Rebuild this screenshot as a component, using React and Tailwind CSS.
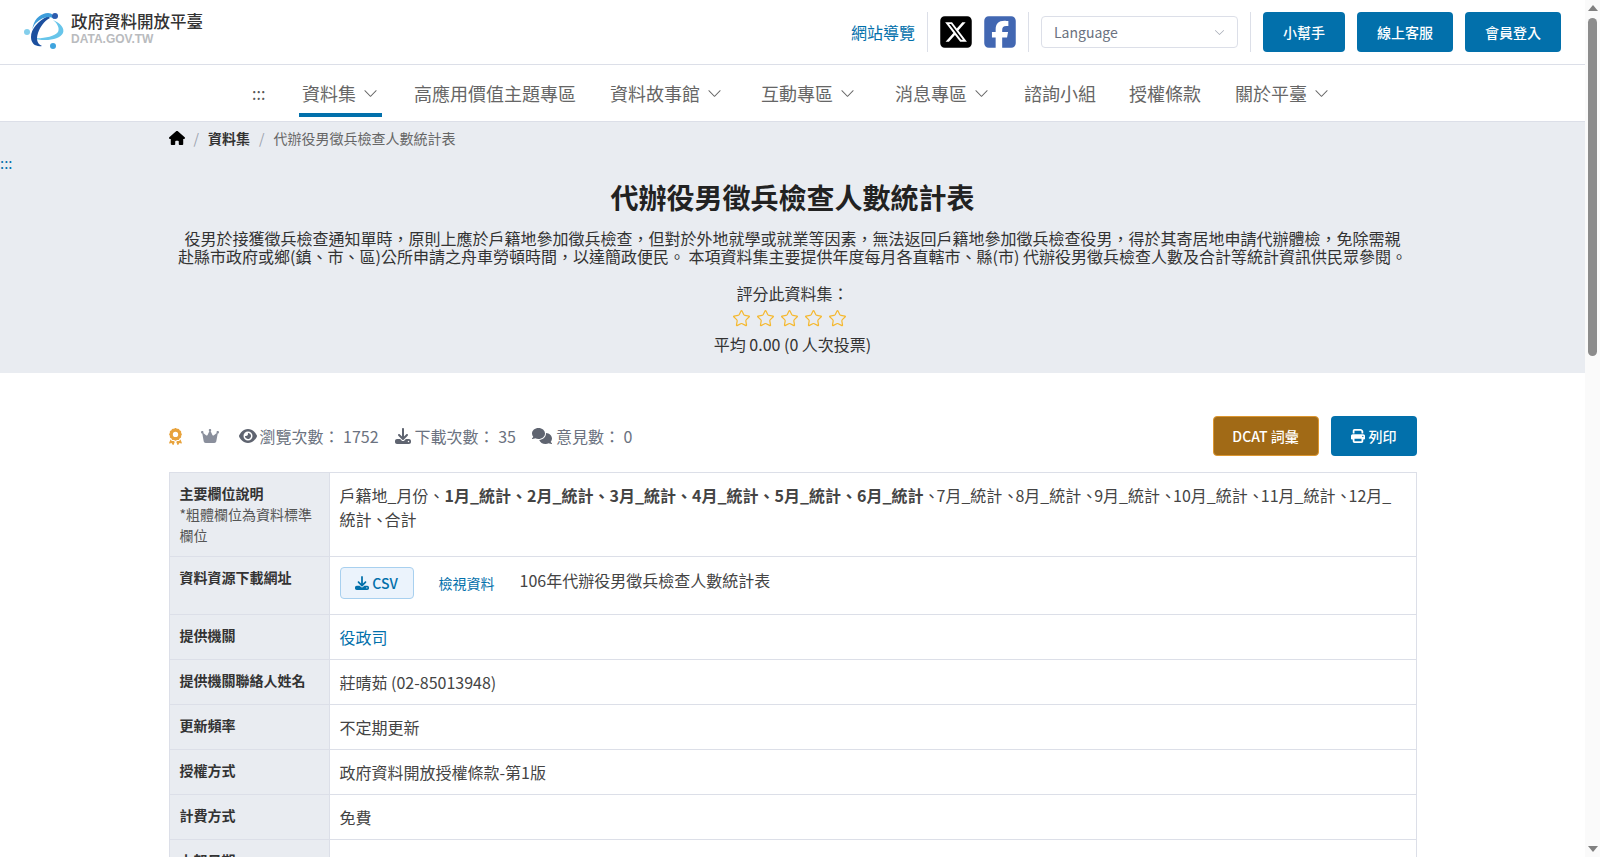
import React from "react";
import { Star } from "lucide-react";
import { BsChevronDown } from "react-icons/bs";
import { FaHouse, FaEye, FaDownload, FaComments, FaPrint, FaCrown, FaAward, FaSquareXTwitter, FaSquareFacebook } from "react-icons/fa6";

const navItems = [
  { label: "資料集", caret: true, active: true, space: "mr-[1px]" },
  { label: "高應用價值主題專區", space: "" },
  { label: "資料故事館", caret: true, space: "mr-[4px]" },
  { label: "互動專區", caret: true, space: "mr-[5px]" },
  { label: "消息專區", caret: true, space: "" },
  { label: "諮詢小組", space: "-mr-[1px]" },
  { label: "授權條款", space: "" },
  { label: "關於平臺", caret: true, space: "" },
];

const boldFields = ["1月_統計", "2月_統計", "3月_統計", "4月_統計", "5月_統計", "6月_統計"];
const plainFields = ["7月_統計", "8月_統計", "9月_統計", "10月_統計", "11月_統計", "12月_統計"];

const simpleRows = [
  ["提供機關聯絡人姓名", "莊晴茹 (02-85013948)"],
  ["更新頻率", "不定期更新"],
  ["授權方式", "政府資料開放授權條款-第1版"],
  ["計費方式", "免費"],
  ["上架日期", "2018-08-15"],
  ["詮釋資料更新時間", "2024-06-12 01:03:27"],
  ["資料集類型", "原始資料"],
  ["編碼格式", "UTF-8"],
  ["資料量", "1"],
  ["收費及法令依據", "無"],
];

function Logo() {
  return (
    <svg width="42" height="38" viewBox="0 0 42 38" className="shrink-0">
      {/* orbit */}
      <path d="M29 7 C36 10 41 15 39 20 C36 27 20 29 8 25 C18 26 30 24 34 19 C36 15 33 10 29 7 Z" fill="#67c5ea" />
      {/* dark crescent */}
      <path d="M24 3 C14 8 7 16 7 24 C7 31 12 34 18 33 C13 31 12 26 14 20 C16 14 20 8 26 5 Z" fill="#1c4f9e" />
      {/* light crescent */}
      <path d="M9 13 C11 5 18 0 24 0 C28 0 30 3 30 6 C26 2 18 4 12 10 C10 12 9 14 8 17 Z" fill="#3d9ddb" />
      <circle cx="31" cy="3" r="3" fill="#2c5cae" />
      <circle cx="3" cy="19" r="3" fill="#84cfec" />
      <circle cx="29" cy="33" r="3" fill="#3fa4de" />
    </svg>
  );
}

function TopButton({ children, className }) {
  return (
    <button className={`h-10 rounded bg-[#0270ab] text-white text-sm font-medium ${className}`}>
      {children}
    </button>
  );
}

function Th({ children }) {
  return (
    <th className="w-[160px] bg-[#e9ecf1] border border-[#dcdfe8] px-[10px] pt-[10px] pb-[8px] align-top text-left text-sm font-bold text-[#333] leading-[21px]">
      {children}
    </th>
  );
}

function Td({ children }) {
  return (
    <td className="border border-[#dcdfe8] px-[10px] py-[10px] align-top text-base text-[#444] leading-6">
      {children}
    </td>
  );
}

function Scrollbar() {
  return (
    <aside className="sticky top-0 h-screen w-[15px] shrink-0 bg-[#fafafa] flex flex-col items-center">
      <div className="mt-[5px] w-0 h-0 border-x-[5px] border-x-transparent border-b-[6px] border-b-[#808080]" />
      <div className="mt-[7px] w-[9px] h-[338px] rounded-full bg-[#8c8c8c]" />
      <div className="mt-auto mb-[5px] w-0 h-0 border-x-[5px] border-x-transparent border-t-[6px] border-t-[#808080]" />
    </aside>
  );
}

export default function App() {
  return (
    <div className="flex items-start bg-white text-[#333] font-['Noto_Sans_CJK_TC','Noto_Sans',sans-serif]">
      <div className="w-[1585px] shrink-0">
        {/* top bar */}
        <header className="h-[65px] border-b border-[#dcdfe8] flex items-center pl-[24px] pr-[24px]">
          <a className="flex items-center gap-[5px]">
            <Logo />
            <div className="-mt-[7px]">
              <div className="text-[16.5px] leading-[20px] text-[#333] font-medium">政府資料開放平臺</div>
              <div className="text-[12px] leading-[14px] pt-[1px] font-bold text-[#b9bbbe] font-['Liberation_Sans',sans-serif]">DATA.GOV.TW</div>
            </div>
          </a>
          <div className="ml-auto flex items-center h-10">
            <a className="text-base text-[#0270ab] mr-3">網站導覽</a>
            <div className="w-px h-10 bg-[#dcdfe8]" />
            <FaSquareXTwitter className="ml-[10px] text-[36px] text-black" />
            <FaSquareFacebook className="ml-[8px] text-[36px] text-[#4267b2]" />
            <div className="w-px h-10 bg-[#dcdfe8] ml-[10px]" />
            <div className="ml-3 w-[197px] h-[32px] border border-[#dcdfe8] rounded flex items-center justify-between pl-3 pr-[12px] text-sm text-[#6b7280]">
              Language
              <BsChevronDown size={11} className="text-[#a3a8b3]" />
            </div>
            <div className="w-px h-10 bg-[#dcdfe8] ml-3" />
            <TopButton className="ml-3 w-[82px]">小幫手</TopButton>
            <TopButton className="ml-3 w-[96px]">線上客服</TopButton>
            <TopButton className="ml-3 w-[96px]">會員登入</TopButton>
          </div>
        </header>

        {/* main nav */}
        <nav className="h-[57px] border-b border-[#dcdfe8] flex items-start pl-[252px]">
          <span className="flex items-center h-[56px] w-[47px] text-base text-[#555]">:::</span>
          <div className="flex gap-[28px]">
            {navItems.map((item) => (
              <a
                key={item.label}
                className={`flex items-center gap-[7px] pl-[3px] pt-[8px] text-lg text-[#666] border-b-4 h-[52px] ${
                  item.caret ? "pr-[4px]" : "pr-[3px]"
                } ${item.space} ${item.active ? "border-[#0270ab]" : "border-transparent"}`}
              >
                {item.label}
                {item.caret && <BsChevronDown size={15} />}
              </a>
            ))}
          </div>
        </nav>

        {/* hero */}
        <section className="h-[251px] bg-[#e9ecf1]">
          <div className="w-[1248px] mx-auto flex items-center h-[31px] text-sm">
            <FaHouse className="text-[16px] text-black" />
            <span className="mx-[9px] text-[#9ca3af]">/</span>
            <span className="font-bold text-[#333]">資料集</span>
            <span className="mx-[9px] text-[#9ca3af]">/</span>
            <span className="text-[#666]">代辦役男徵兵檢查人數統計表</span>
          </div>
          <div className="h-[11px] text-[#0270ab] text-[15px] leading-[19px]">:::</div>
          <h1 className="mt-[13px] text-center text-[28px] leading-[40px] font-bold text-[#222]">代辦役男徵兵檢查人數統計表</h1>
          <p className="w-[1230px] mx-auto mt-[12px] text-center text-base leading-[18.4px] text-[#333]">
            役男於接獲徵兵檢查通知單時，原則上應於戶籍地參加徵兵檢查，但對於外地就學或就業等因素，無法返回戶籍地參加徵兵檢查役男，得於其寄居地申請代辦體檢，免除需親赴縣市政府或鄉(鎮、市、區)公所申請之舟車勞頓時間，以達簡政便民。 本項資料集主要提供年度每月各直轄市、縣(市) 代辦役男徵兵檢查人數及合計等統計資訊供民眾參閱。
          </p>
          <div className="mt-[15px] text-center text-base leading-6">評分此資料集：</div>
          <div className="mt-[4px] pr-[7px] flex justify-center gap-[5px] text-[#f5b82e]">
            {[1, 2, 3, 4, 5].map((n) => (
              <Star key={n} size={19} strokeWidth={1.5} />
            ))}
          </div>
          <div className="mt-[4px] text-center text-base leading-6">平均 0.00 (0 人次投票)</div>
        </section>

        <main className="w-[1248px] mx-auto pt-[43px] pb-[40px]">
          {/* stats + actions */}
          <div className="flex items-center h-10 mb-4 text-base text-[#6b7280]">
            <FaAward className="-ml-[2px] text-[17px] text-[#e8a33d]" />
            <FaCrown className="ml-[17px] text-[18px] text-[#8a8f9c]" />
            <span className="ml-5 flex items-center gap-[3px]"><FaEye className="text-[18px] text-[#5f6470]" />瀏覽次數： 1752</span>
            <span className="ml-4 flex items-center gap-[4px]"><FaDownload className="text-[16px] text-[#5f6470]" />下載次數： 35</span>
            <span className="ml-4 flex items-center gap-[4px]"><FaComments className="text-[20px] text-[#5f6470]" />意見數： 0</span>
            <button className="ml-auto h-10 w-[106px] rounded bg-[#a16a16] border border-[#dc962f] text-white text-sm font-medium">DCAT 詞彙</button>
            <button className="ml-3 h-10 w-[86px] rounded bg-[#0270ab] text-white text-sm font-medium flex items-center justify-center gap-[4px]">
              <FaPrint className="text-[14px]" />列印
            </button>
          </div>

          {/* detail table */}
          <table className="w-full border-collapse">
            <tbody>
              <tr className="h-[84px]">
                <Th>
                  主要欄位說明
                  <div className="font-normal text-[#555]">*粗體欄位為資料標準欄位</div>
                </Th>
                <Td>
                  戶籍地_月份、<b>{boldFields.join("、")}</b>
                  <span className="tracking-[-3px]">、</span>
                  {plainFields.map((f) => (
                    <React.Fragment key={f}>
                      {f}
                      <span className="tracking-[-3px]">、</span>
                    </React.Fragment>
                  ))}
                  合計
                </Td>
              </tr>
              <tr className="h-[58px]">
                <Th>資料資源下載網址</Th>
                <Td>
                  <div className="flex items-start">
                    <a className="h-[32px] w-[74px] rounded border border-[#a8d0ef] bg-[#ebf3fc] text-[#0270ab] text-sm font-medium flex items-center justify-center gap-[3px]">
                      <FaDownload className="text-[14px]" />CSV
                    </a>
                    <a className="ml-[25px] mt-[6px] text-sm text-[#0270ab]">檢視資料</a>
                    <span className="ml-[25px] mt-[1px]">106年代辦役男徵兵檢查人數統計表</span>
                  </div>
                </Td>
              </tr>
              <tr className="h-[45px]">
                <Th>提供機關</Th>
                <Td><a className="text-[#0270ab]">役政司</a></Td>
              </tr>
              {simpleRows.map(([k, v]) => (
                <tr key={k} className="h-[45px]">
                  <Th>{k}</Th>
                  <Td>{v}</Td>
                </tr>
              ))}
            </tbody>
          </table>
        </main>

        <footer className="h-[820px] bg-[#e9ecf1] border-t border-[#dcdfe8] pt-10 text-center text-sm text-[#555]">
          政府資料開放平臺 DATA.GOV.TW
        </footer>
      </div>
      <Scrollbar />
    </div>
  );
}
